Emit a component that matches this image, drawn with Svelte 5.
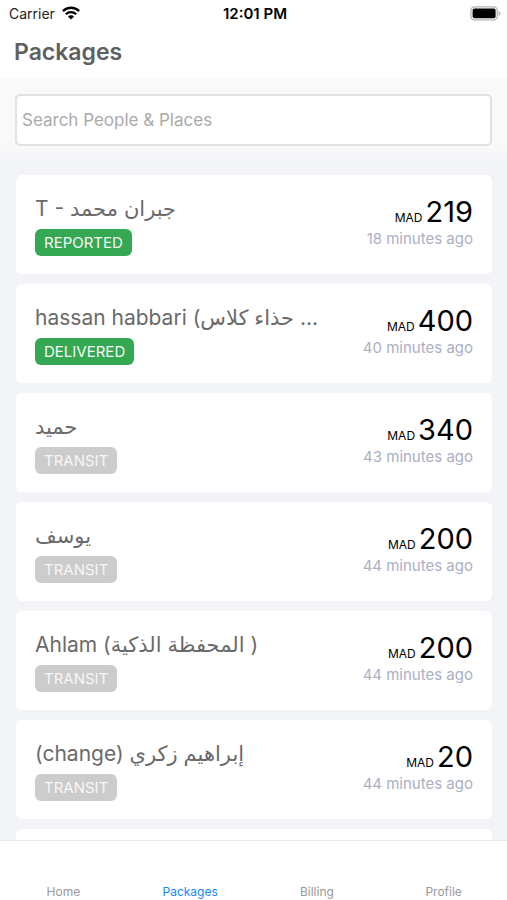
<script lang="ts">
	type Parcel = {
		name: string;
		status: string;
		price: number;
		age: string;
	};

	const parcels: Parcel[] = [
		{ name: 'T - جبران محمد', status: 'REPORTED', price: 219, age: '18 minutes ago' },
		{ name: 'hassan habbari (حذاء كلاس ...', status: 'DELIVERED', price: 400, age: '40 minutes ago' },
		{ name: 'حميد', status: 'TRANSIT', price: 340, age: '43 minutes ago' },
		{ name: 'يوسف', status: 'TRANSIT', price: 200, age: '44 minutes ago' },
		{ name: 'Ahlam (المحفظة الذكية )', status: 'TRANSIT', price: 200, age: '44 minutes ago' },
		{ name: '(change) إبراهيم زكري', status: 'TRANSIT', price: 20, age: '44 minutes ago' }
	];

	const tabs = ['Home', 'Packages', 'Billing', 'Profile'];

	let active = $state('Packages');
	let query = $state('');

	const visible = $derived(
		parcels.filter((p) => p.name.toLowerCase().includes(query.trim().toLowerCase()))
	);
</script>

<div class="screen">
	<div class="status-bar">
		<div class="carrier">
			<span>Carrier</span>
			<svg width="18" height="14" viewBox="0 0 18 14" aria-hidden="true">
				<g fill="none" stroke="#000" stroke-width="2.3">
					<path d="M0.9 5.1a11.5 11.5 0 0 1 16.2 0" />
					<path d="M3.8 8.2a7.4 7.4 0 0 1 10.4 0" />
				</g>
				<path d="M9 13.6L5.9 10.5a4.4 4.4 0 0 1 6.2 0z" />
			</svg>
		</div>
		<time>12:01 PM</time>
		<svg class="battery" width="31" height="15" viewBox="0 0 31 15" aria-hidden="true">
			<rect x="0.9" y="0.9" width="26.4" height="13" rx="3.6" fill="#fff" stroke="#b4b4b4" stroke-width="1.3" />
			<rect x="2.6" y="2.6" width="23" height="9.6" rx="2" />
			<path d="M28.6 5.1c1.2.4 1.8 1.3 1.8 2.3s-.6 1.9-1.8 2.3z" fill="#b4b4b4" />
		</svg>
	</div>

	<header>
		<h1>Packages</h1>
	</header>

	<div class="search">
		<input type="text" placeholder="Search People & Places" aria-label="Search People & Places" bind:value={query} />
	</div>

	<main>
		{#each visible as parcel}
			<article class="card">
				<div class="info">
					<h2>{parcel.name}</h2>
					<span class="badge" class:done={parcel.status !== 'TRANSIT'}>{parcel.status}</span>
				</div>
				<div class="amount">
					<div class="price">
						<small>MAD</small>
						<span>{parcel.price}</span>
					</div>
					<div class="age">{parcel.age}</div>
				</div>
			</article>
		{/each}
		<!-- next card, still loading -->
		<div class="card"></div>
	</main>

	<nav>
		{#each tabs as tab}
			<a href="#{tab.toLowerCase()}" class:active={active === tab} onclick={() => (active = tab)}>{tab}</a>
		{/each}
	</nav>
</div>

<style>
	:global(body) {
		margin: 0;
	}

	.screen {
		display: flex;
		flex-direction: column;
		height: 100vh;
		background: #f3f4f8;
		font-family: Inter, 'DejaVu Sans', sans-serif;
		color: #000;
	}

	.status-bar {
		display: grid;
		grid-template-columns: 1fr auto 1fr;
		align-items: center;
		flex: none;
		height: 26px;
		padding: 0 6px 0 9px;
		background: #fff;
		font-size: 14px;
	}

	.carrier {
		display: flex;
		align-items: center;
		gap: 7px;
		color: #222;
	}

	.status-bar time {
		font-size: 15px;
		font-weight: 600;
	}

	.battery {
		justify-self: end;
	}

	header {
		flex: none;
		padding: 10px 14px;
		background: #fff;
	}

	h1 {
		margin: 0;
		font-size: 23px;
		font-weight: 600;
		line-height: 32px;
		color: #606060;
	}

	.search {
		flex: none;
		padding: 16px 15px 14px;
		background: linear-gradient(#f9f9f9 85%, #f5f6f9);
	}

	.search input {
		box-sizing: border-box;
		display: block;
		width: 100%;
		height: 52px;
		padding: 0 5px;
		border: 2px solid #e2e2e2;
		border-radius: 5px;
		outline: none;
		background: #fff;
		font-family: inherit;
		font-size: 17px;
		color: #606060;
	}

	.search input::placeholder {
		color: #aaa;
		opacity: 1;
	}

	main {
		display: flex;
		flex: 1;
		flex-direction: column;
		gap: 10px;
		min-height: 0;
		padding: 15px 15px 0 16px;
		overflow-y: auto;
		scrollbar-width: none;
	}

	.card {
		box-sizing: border-box;
		display: flex;
		flex: none;
		justify-content: space-between;
		min-height: 99px;
		padding: 19px 19px 18px;
		border-radius: 6px;
		background: #fff;
	}

	.info {
		min-width: 0;
	}

	h2 {
		margin: 0 0 5px;
		overflow: hidden;
		font-size: 21px;
		font-weight: 400;
		line-height: 30px;
		text-overflow: ellipsis;
		white-space: nowrap;
		color: #6a6a6a;
	}

	.badge {
		display: block;
		width: fit-content;
		padding: 0 9px;
		border-radius: 6px;
		background: #ccc;
		font-size: 15px;
		line-height: 27px;
		color: #f6f6f6;
	}

	.badge.done {
		background: #34a853;
	}

	.amount {
		flex: none;
		text-align: right;
	}

	.price {
		display: flex;
		align-items: baseline;
		justify-content: flex-end;
		gap: 3px;
		font-size: 29px;
		line-height: 35px;
	}

	.price small {
		font-size: 12px;
		line-height: 16px;
	}

	.age {
		font-size: 15px;
		line-height: 20px;
		color: #abb0c4;
	}

	nav {
		display: grid;
		grid-template-columns: repeat(4, 1fr);
		flex: none;
		border-top: 1px solid #eaeaea;
		background: #fff;
	}

	nav a {
		padding: 43px 0 0;
		font-size: 12px;
		line-height: 16px;
		text-align: center;
		text-decoration: none;
		color: #999;
	}

	nav a.active {
		color: #1787fb;
	}
</style>
